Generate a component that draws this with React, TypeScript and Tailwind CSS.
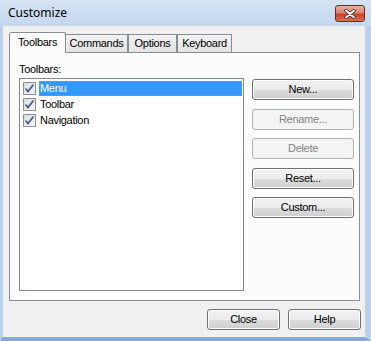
const rows = [
  { name: "Menu", selected: true },
  { name: "Toolbar", selected: false },
  { name: "Navigation", selected: false },
]

const sideButtons = [
  { label: "New...", disabled: false },
  { label: "Rename...", disabled: true },
  { label: "Delete", disabled: true },
  { label: "Reset...", disabled: false },
  { label: "Custom...", disabled: false },
]

const tabs = ["Commands", "Options", "Keyboard"]

const ui = { fontFamily: '"Liberation Sans", Arial, sans-serif' }

function Button({ label, disabled, className }: { label: string; disabled?: boolean; className: string }) {
  if (disabled) {
    return (
      <div className={`${className} flex items-center justify-center rounded-[3px] border border-[#adb2b5] bg-[#f4f4f4] text-[#838383]`}>
        {label}
      </div>
    )
  }
  return (
    <div className={`${className} flex items-center justify-center rounded-[3px] border border-[#707070] bg-[linear-gradient(#f2f2f2_0%,#ebebeb_50%,#dddddd_50%,#cfcfcf_100%)] text-black shadow-[inset_0_0_0_1px_#fcfcfc]`}>
      {label}
    </div>
  )
}

function Check() {
  return (
    <div className="w-[13px] h-[13px] border border-[#8e8f8f] bg-[linear-gradient(135deg,#dcdcdc,#f6f6f6)] flex items-center justify-center">
      <svg width="11" height="11" viewBox="0 0 11 11">
        <path d="M1.5 5.5 L4 8.5 L9.5 1.5" fill="none" stroke="#4a5f97" strokeWidth="1.8" />
      </svg>
    </div>
  )
}

export default function App() {
  return (
    <div className="w-[371px] h-[341px] flex flex-col bg-[#bfd5ee] border-l-[3px] border-r-[6px] border-b-[4px] border-l-[#b9d1ec] border-r-[#b9d1ec] border-b-[#86a9d4] text-[11px] tracking-[-0.3px]" style={ui}>
      {/* title bar */}
      <div className="h-[26px] -ml-[3px] -mr-[6px] flex items-center justify-between bg-[linear-gradient(#d6e4f5,#c3d7ee)] pl-[8px] pr-[6px] shrink-0">
        <span className="text-[12px] tracking-normal text-black" style={{ fontFamily: '"Noto Sans", "Open Sans", sans-serif' }}>Customize</span>
        <div className="w-[30px] h-[17px] mt-[1px] rounded-[3px] border border-[#6e2a22] bg-[linear-gradient(#eab1a5_0%,#d98571_45%,#c2462b_55%,#d57252_100%)] flex items-center justify-center">
          <svg width="12" height="10" viewBox="0 0 12 10">
            <path d="M2 1.5 L10 8.5 M10 1.5 L2 8.5" stroke="#3a1a14" strokeWidth="3.4" strokeLinecap="round" />
            <path d="M2 1.5 L10 8.5 M10 1.5 L2 8.5" stroke="#ffffff" strokeWidth="2" strokeLinecap="round" />
          </svg>
        </div>
      </div>

      {/* client area */}
      <div className="flex-1 bg-[#f0f0f0] flex flex-col pl-[6px] pt-[6px]">
        <div className="flex items-end h-[20px]">
          <div className="relative z-10 w-[57px] h-[21px] -mb-px border border-[#898c95] border-b-0 bg-[#fcfcfc] flex items-center justify-center pb-[1px] rounded-t-[2px]">
            Toolbars
          </div>
          {tabs.map((t, i) => (
            <div
              key={t}
              className={`h-[18px] border border-[#898c95] border-b-0 ${i === 0 ? "border-l-0" : ""} bg-[linear-gradient(#f2f2f2,#e3e3e3)] flex items-center justify-center ${t === "Commands" ? "w-[62px]" : t === "Options" ? "w-[49px]" : "w-[55px]"}`}
            >
              {t}
            </div>
          ))}
        </div>

        <div className="w-[351px] h-[249px] border border-[#898c95] bg-[#fcfcfc] flex pl-[9px]">
          <div className="flex flex-col pt-[10px]">
            <div className="h-[13px] leading-[13px] mb-[2px]">Toolbars:</div>
            <div className="w-[225px] h-[213px] border border-[#828790] bg-white p-[1px] flex flex-col">
              {rows.map((r) => (
                <div key={r.name} className="h-[16px] flex items-center pl-[2px]">
                  <Check />
                  <div
                    className={`ml-[3px] h-[15px] flex items-center pl-[1px] ${r.selected ? "w-[203px] bg-[#3399ff] text-white outline-1 outline-dotted outline-[#e0852e] -outline-offset-1" : "text-black"}`}
                  >
                    {r.name}
                  </div>
                </div>
              ))}
            </div>
          </div>
          <div className="ml-[8px] pt-[26px] flex flex-col gap-[8.5px]">
            {sideButtons.map((b) => (
              <Button key={b.label} label={b.label} disabled={b.disabled} className="w-[102px] h-[21px]" />
            ))}
          </div>
        </div>

        <div className="flex justify-end gap-[8px] pr-[4px] mt-[8px]">
          <Button label="Close" className="w-[73px] h-[21px]" />
          <Button label="Help" className="w-[73px] h-[21px]" />
        </div>
      </div>
    </div>
  )
}
